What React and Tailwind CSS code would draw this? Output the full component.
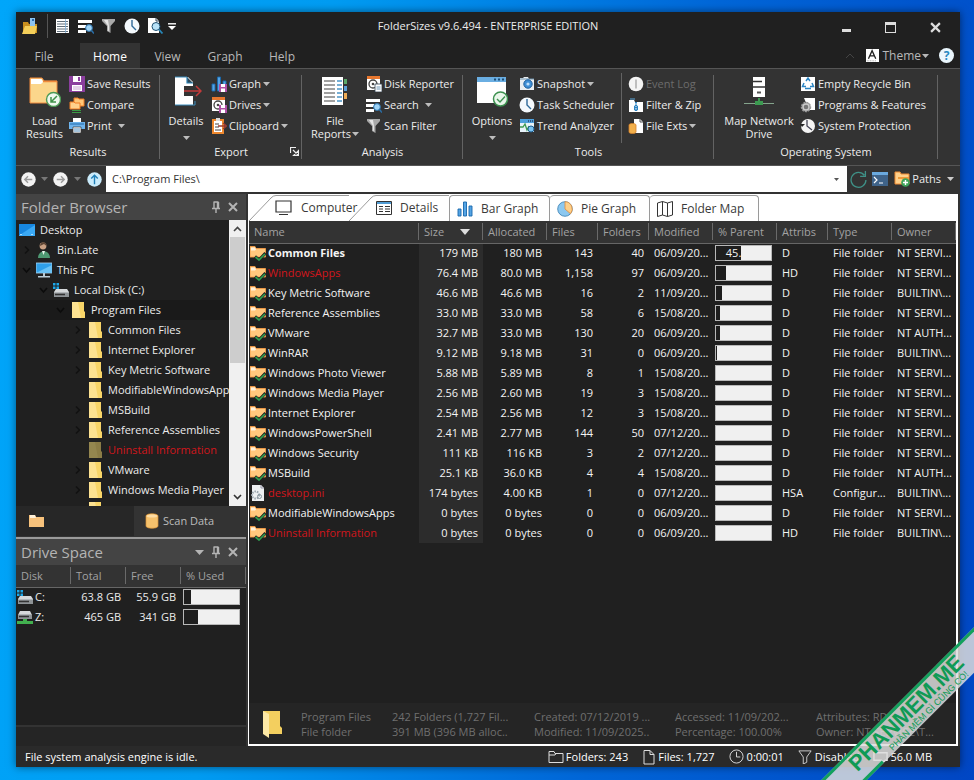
import React from "react";

/* ---------- icons ---------- */
const Svg = ({ s = 16, w, h, vb = "0 0 16 16", className = "", children }) => (
  <svg width={w || s} height={h || s} viewBox={vb} className={"shrink-0 " + className} fill="none" aria-hidden="true">
    {children}
  </svg>
);
const Caret = ({ className = "" }) => (
  <Svg w={7} h={4} vb="0 0 7 4" className={className}><path d="M0 0h7L3.500 4z" fill="currentColor" /></Svg>
);
const AppIcon = () => (
  <Svg><path d="M1 4h5l1 2h8v9H1z" fill="#c98f1e" /><path d="M8 0h5v10H8z" fill="#8ec5f0" /><path d="M10 1h2v2h-2z" fill="#2b6cb0" /><path d="M3 8h12l-2 8H0z" fill="#f4cf5a" /></Svg>
);
const ListIcon = () => (
  <Svg><path d="M1 1h13v14H1z" fill="#fff" /><path d="M2 3.500h11M2 6h11M2 8.500h11M2 11h11M2 13.500h11" stroke="#3a4a58" strokeWidth=".8" /><path d="M10.500 1v14" stroke="#7fb0d8" strokeWidth=".8" /></Svg>
);
const SearchIcon = () => (
  <Svg><path d="M0 2h14v3H0zM0 7h8v3H0zM0 12h8v3H0z" fill="#fff" /><circle cx="11" cy="10" r="3.400" fill="#9fd4f7" stroke="#2a6fa8" /><path d="M13.500 12.500 16 15.500" stroke="#2a6fa8" strokeWidth="1.600" /></Svg>
);
const Funnel = () => (
  <Svg><path d="M1 1h13v2L9.500 8v7L6 13V8L1 3z" fill="#a9a9a9" /><path d="M3 2h4l1 6v5l-1-.6V8z" fill="#e4e4e4" /></Svg>
);
const ClockIcon = () => (
  <Svg><circle cx="8" cy="8" r="7.500" fill="#f4f9fd" /><path d="M8 2v6l4 4" stroke="#2f6a99" strokeWidth="1.400" /></Svg>
);
const DocSearch = () => (
  <Svg><path d="M1 0h8l3 3v12H1z" fill="#fff" /><path d="M9 0v3h3" stroke="#345" /><circle cx="9" cy="8.500" r="4" fill="#b9e2f7" stroke="#1f4f70" /><path d="m12 11.500 3.500 4" stroke="#2787b8" strokeWidth="1.800" /></Svg>
);
const LoadIcon = () => (
  <Svg s={32} vb="0 0 32 32"><path d="M1 3h12l2 3h13v22H1z" fill="#fbd68b" stroke="#f08a3c" strokeWidth="1" /><path d="M2 4h10.500l1.500 3-2 2H2z" fill="#fff" /><path d="M14 6.500h14" stroke="#f08a3c" strokeWidth="1.500" /><circle cx="24.500" cy="24.500" r="7" fill="#eef8ee" stroke="#4c9a55" strokeWidth="1.400" /><path d="m28 21-6 6m0-5v5h5" stroke="#3f9149" strokeWidth="1.500" /></Svg>
);
const SaveIcon = () => (
  <Svg><path d="M0 0h16v16H0z" fill="#8b3f9e" /><path d="M4 0h8v6H4zM3 9h10v6H3z" fill="#fff" /><path d="M9 1h2v4H9z" fill="#8b3f9e" /><path d="M4 11h8M4 13h8" stroke="#c9a6d3" /></Svg>
);
const CompareIcon = () => (
  <Svg><path d="M5 1h4l1 1h5v7H5z" fill="#ffc778" stroke="#f07d22" /><path d="M1 5h4l1 1h5v6H1z" fill="#ffd18c" stroke="#f07d22" /><path d="M3 13.500h9M3 15.500h9" stroke="#3c9a45" /></Svg>
);
const PrintIcon = () => (
  <Svg><path d="M4 0h8v4H4z" fill="#fff" /><path d="M0 4h16v7H0z" fill="#6db3ec" /><path d="M1 6h14" stroke="#256ba8" /><path d="M4 9h8v6H4z" fill="#fff" stroke="#333" strokeWidth=".7" /><path d="M5 11h6M5 13h6" stroke="#4b88b8" /></Svg>
);
const DetailsIcon = () => (
  <Svg s={32} vb="0 0 32 32"><path d="M5 2h13l5 5v23H5z" fill="#fff" /><path d="M17 2v6h6" fill="#2e4a5a" stroke="#2f83b5" strokeWidth="1.200" /><path d="M14 11h10v10H14z" fill="#333" /><path d="M5 2h12M5 30h20v-4" stroke="#3a8cbc" strokeWidth="1" /><path d="M14 16h17m-5-5 5 5-5 5" stroke="#c23a3a" strokeWidth="1.500" /></Svg>
);
const MiniDisk = () => (
  <g><path d="M8 8h8v8H8z" fill="#b04fa6" /><path d="M10 8h4v3h-4zM10 12.500h4V16h-4z" fill="#fff" /></g>
);
const BarsIcon = ({ s = 16, disk = false }) => (
  <Svg s={s}><path d="M1 8h3v7H1zM6.500 1h3v14h-3zM12 5h3v10h-3z" fill="#55a4e4" stroke="#1767ac" strokeWidth=".9" />{disk && <MiniDisk />}</Svg>
);
const DriveRep = ({ doc = false }) => (
  <Svg><path d="M1 1h13v13H1z" fill="#fff" /><path d="M1 0h13v3H1z" fill="#e8772e" /><circle cx="7" cy="8" r="4" stroke="#444" strokeWidth="1.300" /><circle cx="7" cy="8" r="1.300" fill="#444" />{doc ? <g><path d="M9 8h7v8H9z" fill="#fff" stroke="#345" strokeWidth=".8" /><path d="M10.500 11h4m-4 2h4" stroke="#4a7fa8" strokeWidth=".8" /></g> : <MiniDisk />}</Svg>
);
const ClipIcon = () => (
  <Svg><path d="M2 2h10v13H2z" fill="#fff" stroke="#ee8930" strokeWidth="2" /><path d="M5 0h4v3H5z" fill="#ddd" /><path d="M4 6h4M4 9h4M4 12h6" stroke="#444" /><path d="M7 8h8m-3-3 3.500 3L12 11" stroke="#9c3d33" strokeWidth="1.300" /></Svg>
);
const ReportIcon = () => (
  <Svg s={32} vb="0 0 32 32"><path d="M3 2h21v28H3z" fill="#fff" /><path d="M5 6h11M5 10h11M5 14h11M5 18h11M5 22h11M5 26h11" stroke="#444" strokeWidth="1.200" /><path d="M18 6h5M18 10h5M18 14h5M18 18h5M18 22h5M18 26h5" stroke="#4b95c6" strokeWidth="1.300" /><path d="M25 4h3v5h-3z" fill="#5aa869" /><path d="M25 11h3v5h-3z" fill="#5a9fd8" /><path d="M25 18h3v6h-3z" fill="#efac55" /></Svg>
);
const OptionsIcon = () => (
  <Svg s={32} vb="0 0 32 32"><path d="M1 2h29v26H1z" fill="#fff" /><path d="M1 2h29v5H1z" fill="#6aaee2" /><path d="M18 4.500h2m2 0h2m2 0h2" stroke="#1c4e78" strokeWidth="2" /><circle cx="24.500" cy="24" r="7" fill="#e9f6ea" stroke="#3d9150" strokeWidth="1.500" /><path d="m21 24 3 3 5-5.500" stroke="#3d9150" strokeWidth="1.400" /></Svg>
);
const CameraIcon = () => (
  <Svg><path d="M1 2h3l1-1h4l1 2h5v11H1z" fill="#e9eef2" /><path d="M1 3h14" stroke="#6b8ea8" /><circle cx="9" cy="8" r="4.200" fill="#3f8fd6" stroke="#1f5f9c" /><circle cx="9" cy="8" r="1.600" fill="#bfe0fb" /></Svg>
);
const TrendIcon = () => (
  <Svg><path d="M1 1h14v13H1z" fill="#e8f3fa" /><path d="M1 1h14v4H1z" fill="#4ea0dc" /><path d="M9 3h5" stroke="#113" strokeDasharray="1 1" /><path d="M1 9h3l2-3 2 6 2-4" stroke="#3f9a50" strokeWidth="1.300" /><circle cx="12" cy="11" r="3" fill="#7cc4f2" stroke="#1e5f91" /></Svg>
);
const EventIcon = () => (
  <Svg><circle cx="8" cy="8" r="7.300" fill="#f4f4f4" /><path d="M8 3.500v9" stroke="#999" strokeWidth="1.200" /></Svg>
);
const ZipIcon = () => (
  <Svg><path d="M1 3h5l1 2h8v10H1z" fill="#fff" /><path d="M2 2h5" stroke="#58a6dc" /><path d="M8 5v10" stroke="#2e84c2" strokeWidth="2" strokeDasharray="1.500 1" /><path d="M6.500 9h3v4h-3z" stroke="#2e84c2" /></Svg>
);
const ExtsIcon = () => (
  <Svg><path d="M6 1h6l3 3v11H6z" fill="#fff" /><path d="M12 1v3h3" stroke="#555" /><path d="M1 7c0-2 7-2 7 0v7c0 2-7 2-7 0z" fill="#f2b04c" stroke="#d5812a" strokeWidth=".8" /></Svg>
);
const NetDrive = () => (
  <Svg s={32} vb="0 0 32 32"><path d="M10 2h12v20H10z" fill="#fff" /><path d="M10 6.500h9M10 12h12" stroke="#333" strokeWidth="1.300" /><path d="M14 17.500h4" stroke="#555" strokeWidth="2" /><path d="M1 28.500h30" stroke="#84a48c" /><path d="M12 26h8v4h-8zM15 23h2v4h-2z" fill="#3c9a51" /></Svg>
);
const RecycleIcon = () => (
  <Svg><path d="M1 1h14v14H1z" fill="#fff" /><path d="m6 5 2-3 2 3M4 7l-1.500 3.500H6M12 7l1.500 3.500H10M5 12.500h6" stroke="#2a85c4" strokeWidth="1.500" /></Svg>
);
const ProgIcon = () => (
  <Svg><path d="M4 1h11v12H9z" fill="#fff" /><circle cx="6" cy="10" r="4.500" fill="#777" stroke="#999" strokeWidth="1.500" strokeDasharray="2 1" /><circle cx="6" cy="10" r="3" stroke="#ccc" strokeWidth="1.400" /></Svg>
);
const ProtectIcon = () => (
  <Svg><circle cx="8" cy="8" r="7" fill="#f4f4f4" /><path d="M7 2v6l5 4" stroke="#445" strokeWidth="1.300" /><path d="M0 6h5L2 9z" fill="#222" /></Svg>
);
const NavIcon = ({ d, up }) => (
  <Svg s={15}><circle cx="8" cy="8" r="7.700" fill={up ? "#c9ebfb" : "#f3f3f3"} /><path d={d} stroke={up ? "#1f7fb8" : "#9b9b9b"} strokeWidth="1.500" /></Svg>
);
const PersonIcon = () => (
  <Svg><circle cx="7" cy="4" r="3.400" fill="#c9a184" /><path d="M4 4c0-5 7-5 6.500 0L8 2z" fill="#5b4433" /><path d="M2 16c0-9 12-9 12 0z" fill="#4e9872" /><path d="m6 9 1.500 4L9 9z" fill="#e8f3ec" /></Svg>
);
const DesktopIcon = () => (
  <Svg><path d="M0 2h16v12H0z" fill="#1787e0" /><path d="M0 13.500 16 3v11H0z" fill="#3aa9f5" /><path d="M1 12.500h13" stroke="#a5dbff" strokeDasharray="2 9" /></Svg>
);
const PcIcon = () => (
  <Svg><path d="M0 1h16v10H0z" fill="#2f9fe8" stroke="#a9d6f2" strokeWidth=".8" /><path d="M0 11 16 3v8z" fill="#6cc3f5" /><path d="M7 11h2v3H7zM2 14h12v1.500H2z" fill="#b9cbd6" /></Svg>
);
const DiskIcon = ({ net }) => (
  <Svg>
    <path d={net ? "m3 2-2 4v4h14V6l-2-4z" : "m3 7-2 3v5h15v-5l-2-3z"} fill="#d6d9db" />
    <path d={net ? "M1 5.500h14V10H1z" : "M1 10.500h15V15H1z"} fill="#8e9396" />
    <path d={net ? "M2 7.500h10" : "M2 12.500h10"} stroke="#333" strokeWidth="1.500" />
    {net ? <path d="M0 12h16v3H0zM6 10h4v5H6z" fill="#42b04f" /> : <path d="M0 1h2.500v2.500H0zM3.500 1H6v2.500H3.500zM0 4.500h2.500V7H0zM3.500 4.500H6V7H3.500z" fill="#1da7e8" />}
  </Svg>
);
const FolderIcon = ({ dim }) => (
  <Svg w={14} h={16} vb="0 0 14 16"><path d="M1 0h12v9l1 1v6H1z" fill={dim ? "#8b7c46" : "#f8d568"} /><path d="M1 0h6l3 16H1z" fill={dim ? "#94864f" : "#fde291"} /></Svg>
);
const FolderCheck = () => (
  <Svg><path d="M0 1.500h5l1 2h9.500V12H0z" fill="#ffc87d" stroke="#f39a45" strokeWidth=".9" /><path d="M1 2.500h4l1 2-1 1H1z" fill="#fff2dc" /><path d="m5 11.500 4 3.500L15.500 8" stroke="#222" strokeWidth="3" /><path d="m5.500 12 3.500 3L15 9" stroke="#2f9e4f" strokeWidth="1.700" /></Svg>
);
const IniIcon = () => (
  <Svg><path d="M2 0h9l3 3v13H2z" fill="#eef1f3" /><path d="M11 0v3h3" stroke="#99a" /><circle cx="5.500" cy="10" r="3.500" stroke="#9aa5ad" strokeWidth="2" strokeDasharray="1.500 1" /><circle cx="9.500" cy="11.500" r="2" stroke="#8b98a1" /></Svg>
);
const Pin = () => (
  <Svg s={12} vb="0 0 12 12"><path d="M3.500 1h5M4 1v6M7.500 1v6M8.500 1v6M2 7.500h8M6 8v4" stroke="currentColor" strokeWidth="1.400" /></Svg>
);
const Cross = ({ s = 10 }) => (
  <Svg s={s} vb="0 0 10 10"><path d="m1 1 8 8M9 1 1 9" stroke="currentColor" strokeWidth="2" /></Svg>
);
const Chevron = ({ open }) => (
  <Svg w={17} h={16} vb="0 0 17 16"><path d={open ? "m4 6 3.500 4L11 6" : "m6 4.500 3.500 3.500L6 11.500"} stroke={open ? "#0c0c0c" : "#121212"} strokeWidth="1.600" /></Svg>
);

/* ---------- ribbon ---------- */
const Small = ({ icon, label, caret, gap, disabled }) => (
  <button className={"flex h-[21px] items-center gap-[2px] whitespace-nowrap " + (disabled ? "text-[#6c6c6c]" : "")}>
    {icon}
    <span>{label}</span>
    {caret && <Caret className={gap ? "ml-1 text-[#bdbdbd]" : "text-[#bdbdbd]"} />}
  </button>
);
const Large = ({ icon, lines, caret, inlineCaret, width }) => (
  <button className={"flex h-[72px] flex-col items-center pt-[2px] leading-[13px] " + width}>
    {icon}
    <span className="mt-[7px] whitespace-nowrap">{lines[0]}</span>
    {lines[1] && (
      <span className="flex items-center gap-px whitespace-nowrap">
        {lines[1]}
        {inlineCaret && <Caret className="text-[#bdbdbd]" />}
      </span>
    )}
    {caret && <Caret className="mt-[9px] text-[#bdbdbd]" />}
  </button>
);
const Group = ({ label, width, pad, launcher, children }) => (
  <section aria-label={label} className={"relative flex shrink-0 flex-col " + width}>
    <div className={"flex h-[72px] " + pad}>{children}</div>
    <div className="text-center leading-[13px]">{label}</div>
    {launcher && (
      <button aria-label="Export settings" className="absolute right-[3px] bottom-[9px]">
        <Svg s={9} vb="0 0 9 9"><path d="M.5 6V.500H6M3 3l5 5M8.500 3.500v5h-5z" stroke="#eee" strokeWidth="1.200" fill="none" /></Svg>
      </button>
    )}
    <div className="absolute top-[2px] right-0 h-[84px] w-px bg-[#636363]" />
  </section>
);

/* ---------- data ---------- */
const tree = [
  ["Desktop", 0, <DesktopIcon />, null],
  ["Bin.Late", 1, <PersonIcon />, "closed"],
  ["This PC", 1, <PcIcon />, "open"],
  ["Local Disk (C:)", 2, <DiskIcon />, "open"],
  ["Program Files", 3, <FolderIcon />, "open"],
  ["Common Files", 4, <FolderIcon />, "closed"],
  ["Internet Explorer", 4, <FolderIcon />, "closed"],
  ["Key Metric Software", 4, <FolderIcon />, "closed"],
  ["ModifiableWindowsApps", 4, <FolderIcon />, null],
  ["MSBuild", 4, <FolderIcon />, "closed"],
  ["Reference Assemblies", 4, <FolderIcon />, "closed"],
  ["Uninstall Information", 4, <FolderIcon dim />, null],
  ["VMware", 4, <FolderIcon />, "closed"],
  ["Windows Media Player", 4, <FolderIcon />, "closed"],
  ["Windows Photo Viewer", 4, <FolderIcon />, "closed"],
];
const indents = ["pl-[3px]", "pl-[3px]", "pl-[20px]", "pl-[37px]", "pl-[54px]"];

const rows = [
  ["Common Files", "179 MB", "180 MB", "143", "40", "06/09/20...", 46, "D", "File folder", "NT SERVI..."],
  ["WindowsApps", "76.4 MB", "80.0 MB", "1,158", "97", "06/09/20...", 18, "HD", "File folder", "NT SERVI..."],
  ["Key Metric Software", "46.6 MB", "46.6 MB", "16", "2", "11/09/20...", 11, "D", "File folder", "BUILTIN\\..."],
  ["Reference Assemblies", "33.0 MB", "33.0 MB", "58", "6", "15/08/20...", 8, "D", "File folder", "NT SERVI..."],
  ["VMware", "32.7 MB", "33.0 MB", "130", "20", "06/09/20...", 8, "D", "File folder", "NT AUTH..."],
  ["WinRAR", "9.12 MB", "9.18 MB", "31", "0", "06/09/20...", 2, "D", "File folder", "BUILTIN\\..."],
  ["Windows Photo Viewer", "5.88 MB", "5.89 MB", "8", "1", "15/08/20...", 0, "D", "File folder", "NT SERVI..."],
  ["Windows Media Player", "2.56 MB", "2.60 MB", "19", "3", "15/08/20...", 0, "D", "File folder", "NT SERVI..."],
  ["Internet Explorer", "2.54 MB", "2.56 MB", "12", "3", "15/08/20...", 0, "D", "File folder", "NT SERVI..."],
  ["WindowsPowerShell", "2.41 MB", "2.77 MB", "144", "50", "07/12/20...", 0, "D", "File folder", "NT SERVI..."],
  ["Windows Security", "111 KB", "116 KB", "3", "2", "07/12/20...", 0, "D", "File folder", "NT SERVI..."],
  ["MSBuild", "25.1 KB", "36.0 KB", "4", "4", "15/08/20...", 0, "D", "File folder", "NT AUTH..."],
  ["desktop.ini", "174 bytes", "4.00 KB", "1", "0", "07/12/20...", 0, "HSA", "Configur...", "BUILTIN\\..."],
  ["ModifiableWindowsApps", "0 bytes", "0 bytes", "0", "0", "06/09/20...", 0, "D", "File folder", "NT SERVI..."],
  ["Uninstall Information", "0 bytes", "0 bytes", "0", "0", "06/09/20...", 0, "HD", "File folder", "BUILTIN\\..."],
];
const red = new Set(["WindowsApps", "desktop.ini", "Uninstall Information"]);

const UsageBar = ({ value, text }) => (
  <div className="flex h-[16px] w-[57px] border border-[#b8b8b8] bg-[#f0f0f0]">
    <div className="h-full overflow-hidden bg-[#1e1e1e] text-right leading-[14px]" style={{ width: value + "%" }}>{text}</div>
  </div>
);

const Th = ({ children, sort }) => (
  <th className="h-[22px] border-b border-[#666] p-0 text-left font-normal">
    <div className="flex h-[17px] items-center justify-between overflow-hidden border-r border-[#6a6a6a] pr-3 pl-[5px] whitespace-nowrap">
      {children}
      {sort && <Svg w={10} h={6} vb="0 0 10 6"><path d="M0 0h10L5 6z" fill="#ddd" /></Svg>}
    </div>
  </th>
);

const ViewTab = ({ icon, label, width, slant }) => (
  <button role="tab" className={"relative flex h-full shrink-0 items-center text-[12px] text-[#3a3a3a] " + width + (slant ? "" : " mt-px rounded-t-[4px] border-t border-r border-[#9a9a9a]")}>
    {slant && (
      <svg className="absolute bottom-0 left-0 h-full w-full" viewBox="0 0 100 27" preserveAspectRatio="none" fill="none" aria-hidden="true">
        <path d="M0 27 22 4Q24 1.500 27 1.500H100" stroke="#9a9a9a" />
      </svg>
    )}
    <span className="relative flex items-center">{icon}<span className="ml-2 whitespace-nowrap">{label}</span></span>
  </button>
);

const PanelHead = ({ title, menu }) => (
  <div className="flex h-[26px] shrink-0 items-center bg-[#444] pr-[8px] pl-[5px] text-[#b4b4b4]">
    <h2 className="grow text-[15px]">{title}</h2>
    {menu && <button aria-label="Panel menu" className="mr-[6px]"><Svg w={9} h={5} vb="0 0 9 5"><path d="M0 0h9L4.500 5z" fill="currentColor" /></Svg></button>}
    <button aria-label={"Pin " + title} className="mr-[6px]"><Pin /></button>
    <button aria-label={"Close " + title}><Cross /></button>
  </div>
);

export default function App() {
  return (
    <div className="relative flex h-screen min-h-[600px] flex-col overflow-hidden bg-[linear-gradient(100deg,#00a6fa_0%,#009cf2_30%,#0066d8_65%,#0046c4_100%)] pt-[12px] pr-[14px] pb-[13px] pl-[16px] font-['Open_Sans','Noto_Sans',sans-serif] text-[11px] leading-[16px] text-[#ececec]">
      <div className="flex min-h-0 grow flex-col bg-[#202020] shadow-[0_0_8px_rgba(0,0,0,0.5)]">
        {/* title bar */}
        <header className="grid h-[31px] shrink-0 grid-cols-[1fr_auto_1fr] items-center pb-[3px]">
          <div className="flex items-center pl-[6px]">
            <AppIcon />
            <div className="mr-[7px] ml-[9px] h-[24px] w-px bg-[#555]" />
            <div className="flex gap-[7px]">
              <button aria-label="Details"><ListIcon /></button>
              <button aria-label="Search"><SearchIcon /></button>
              <button aria-label="Scan filter"><Funnel /></button>
              <button aria-label="Task scheduler"><ClockIcon /></button>
              <button aria-label="Preview"><DocSearch /></button>
            </div>
            <button aria-label="Customize toolbar" className="ml-[5px]"><Svg w={8} h={7} vb="0 0 8 7"><path d="M0 .8h8" stroke="#fff" strokeWidth="1.400" /><path d="M0 3h8L4 7z" fill="#fff" /></Svg></button>
          </div>
          <h1 className="whitespace-nowrap">FolderSizes v9.6.494 - ENTERPRISE EDITION</h1>
          <div className="flex items-center justify-end gap-[34px] pt-[3px] pr-[19px] text-[#ddd]">
            <button aria-label="Minimize" className="mt-[6px] h-[3px] w-[9px] bg-[#ddd]" />
            <button aria-label="Maximize" className="h-[11px] w-[11px] border border-t-[3px] border-[#ddd]" />
            <button aria-label="Close"><Cross s={11} /></button>
          </div>
        </header>

        {/* ribbon tabs */}
        <nav className="flex h-[25px] shrink-0 items-stretch text-[12px] text-[#b8b8b8]">
          <button className="mr-2 w-[56px] pt-[3px]">File</button>
          <button className="w-[60px] bg-[#333] pt-[3px] text-white">Home</button>
          <button className="w-[55px] pt-[3px]">View</button>
          <button className="w-[60px] pt-[3px]">Graph</button>
          <button className="w-[54px] pt-[3px]">Help</button>
          <div className="flex grow items-center justify-end pr-[6px]">
            <button aria-label="Collapse ribbon" className="mr-[12px]"><Svg w={8} h={5} vb="0 0 8 5"><path d="m0 5 4-4 4 4" stroke="#444" /></Svg></button>
            <button className="flex items-center">
              <Svg s={13} className="mr-[3px]"><path d="M0 0h16v16H0z" fill="#fff" /><path d="m3 12 4.500-10L12 12M5 8.500h5" stroke="#222" strokeWidth="1.600" /><path d="M1 14.500h12" stroke="#888" strokeDasharray="1 1" /></Svg>
              Theme<Caret className="ml-px" />
            </button>
            <button aria-label="Help" className="ml-[10px] flex h-[15px] w-[15px] items-center justify-center rounded-full bg-[#eaf6fd] font-bold text-[#2888c0]">?</button>
          </div>
        </nav>

        {/* ribbon */}
        <div className="flex h-[98px] shrink-0 overflow-hidden border-t border-b border-[#555] bg-[#333] pt-[4px]">
          <Group label="Results" width="w-[144px]" pad="pl-[4px]">
            <Large width="w-[49px]" icon={<LoadIcon />} lines={["Load", "Results"]} />
            <div>
              <Small icon={<SaveIcon />} label="Save Results" />
              <Small icon={<CompareIcon />} label="Compare" />
              <Small icon={<PrintIcon />} label="Print" caret gap />
            </div>
          </Group>
          <Group label="Export" width="w-[142px]" pad="pl-px" launcher>
            <Large width="w-[50px]" icon={<DetailsIcon />} lines={["Details"]} caret />
            <div>
              <Small icon={<BarsIcon disk />} label="Graph" caret />
              <Small icon={<DriveRep />} label="Drives" caret />
              <Small icon={<ClipIcon />} label="Clipboard" caret />
            </div>
          </Group>
          <Group label="Analysis" width="w-[161px]" pad="pl-[2px]">
            <Large width="w-[62px]" icon={<ReportIcon />} lines={["File", "Reports"]} inlineCaret />
            <div>
              <Small icon={<DriveRep doc />} label="Disk Reporter" />
              <Small icon={<SearchIcon />} label="Search" caret gap />
              <Small icon={<Funnel />} label="Scan Filter" />
            </div>
          </Group>
          <Group label="Tools" width="w-[251px]" pad="pl-[2px]">
            <Large width="w-[54px]" icon={<OptionsIcon />} lines={["Options"]} caret />
            <div className="w-[102px]">
              <Small icon={<CameraIcon />} label="Snapshot" caret />
              <Small icon={<ClockIcon />} label="Task Scheduler" />
              <Small icon={<TrendIcon />} label="Trend Analyzer" />
            </div>
            <div className="mr-[6px] h-[70px] w-px bg-[#636363]" />
            <div>
              <Small icon={<EventIcon />} label="Event Log" disabled />
              <Small icon={<ZipIcon />} label="Filter & Zip" />
              <Small icon={<ExtsIcon />} label="File Exts" caret />
            </div>
          </Group>
          <Group label="Operating System" width="w-[224px]" pad="pl-[4px]">
            <Large width="w-[82px]" icon={<NetDrive />} lines={["Map Network", "Drive"]} />
            <div>
              <Small icon={<RecycleIcon />} label="Empty Recycle Bin" />
              <Small icon={<ProgIcon />} label="Programs & Features" />
              <Small icon={<ProtectIcon />} label="System Protection" />
            </div>
          </Group>
        </div>

        {/* address bar */}
        <div className="flex h-[26px] shrink-0 items-center bg-[#333] pr-[6px] pl-[5px]">
          <button aria-label="Back"><NavIcon d="M12 8H4m3.500-3.500L4 8l3.500 3.500" /></button>
          <Caret className="mx-[5px] text-[#777]" />
          <button aria-label="Forward"><NavIcon d="M4 8h8M8.500 4.500 12 8l-3.500 3.500" /></button>
          <Caret className="mx-[6px] text-[#777]" />
          <button aria-label="Up"><NavIcon up d="M8 13V4M4.500 7 8 3.500 11.500 7" /></button>
          <div className="ml-[4px] flex h-full grow items-center bg-white pr-[8px]">
            <input aria-label="Path" defaultValue={"C:\\Program Files\\"} className="h-full min-w-0 grow bg-white px-[6px] pb-[2px] text-[#333] outline-none" />
            <button aria-label="Path history"><Svg w={5} h={3} vb="0 0 5 3"><path d="M0 0h5L2.500 3z" fill="#555" /></Svg></button>
          </div>
          <button aria-label="Refresh" className="mr-[5px] ml-[3px]"><Svg s={17}><path d="M13.500 4A7 7 0 1 0 15 8.500M14.500 0v5h-5" stroke="#3f9187" strokeWidth="1.200" /></Svg></button>
          <button aria-label="Console" className="mr-[6px]"><Svg><path d="M0 1h16v14H0z" fill="#3f6389" /><path d="M0 1h16v3H0z" fill="#6aa9de" /><path d="m2 6 3 3-3 3M7 12h4" stroke="#fff" strokeWidth="1.200" /></Svg></button>
          <button className="flex items-center">
            <Svg className="mr-[2px]"><path d="M1 1h5l1 2h8v10H1z" fill="#ffd08a" stroke="#ee8a32" /><path d="M4 6h11v2H4z" fill="#ee9a3a" /><circle cx="11.500" cy="11.500" r="4.300" fill="#3fa35a" /><path d="M11.500 9v5M9 11.500h5" stroke="#fff" strokeWidth="1.400" /></Svg>
            Paths<Caret className="ml-[6px] text-[#ccc]" />
          </button>
        </div>

        {/* body */}
        <div className="flex min-h-0 grow bg-[#333] pt-[2px]">
          <aside className="flex w-[230px] shrink-0 flex-col">
            <PanelHead title="Folder Browser" />
            <div className="flex h-[286px] shrink-0">
              <ul className="min-w-0 grow overflow-hidden bg-[#202020]">
                {tree.map(([name, level, icon, state]) => (
                  <li key={name} className={"flex h-[20px] items-center whitespace-nowrap " + indents[level] + (name === "Program Files" ? " bg-[#1a1a1a]" : "")}>
                    {level > 0 && (state ? <Chevron open={state === "open"} /> : <span className="w-[17px] shrink-0" />)}
                    <span className="flex w-[16px] shrink-0 justify-center">{icon}</span>
                    <span className={"ml-[5px] " + (red.has(name) ? "text-[#d0161c]" : "")}>{name}</span>
                  </li>
                ))}
              </ul>
              <div className="flex w-[17px] shrink-0 flex-col items-center bg-[#f0f0f0] py-[6px]" aria-hidden="true">
                <Svg w={9} h={6} vb="0 0 9 6"><path d="m1 5 3.500-3.500L8 5" stroke="#444" strokeWidth="1.600" /></Svg>
                <div className="mt-[5px] h-[126px] w-[15px] bg-[#cdcdcd]" />
                <div className="grow" />
                <Svg w={9} h={6} vb="0 0 9 6"><path d="m1 1 3.500 3.500L8 1" stroke="#333" strokeWidth="1.600" /></Svg>
              </div>
            </div>
            <div className="flex h-[31px] shrink-0 bg-[#333] pb-px text-[#bcbcbc]" role="tablist">
              <button role="tab" aria-label="Folder Browser" className="flex w-[118px] items-center bg-[#272727] pl-[13px]">
                <Svg><path d="M0 2h6l1 2h8v10H0z" fill="#f7c27c" /><path d="M1 2h5l1 3H1z" fill="#fff0d8" /></Svg>
              </button>
              <button role="tab" className="flex items-center gap-[3px] pl-[10px]">
                <Svg><path d="M2 3c0-3 12-3 12 0v10c0 3-12 3-12 0z" fill="#f5c16c" stroke="#db9437" strokeWidth=".7" /><path d="M2.500 3c0 2 11 2 11 0s-11-2-11 0z" fill="#fddca4" /></Svg>
                Scan Data
              </button>
            </div>
            <div className="h-[2px] shrink-0 bg-[#9a9a9a]" />
            <PanelHead title="Drive Space" menu />
            <div className="flex min-h-0 grow flex-col bg-[#202020]">
              <table className="w-full table-fixed border-collapse">
                <colgroup><col className="w-[55px]" /><col className="w-[55px]" /><col className="w-[55px]" /><col /></colgroup>
                <thead className="bg-[#333] text-[#a2a2a2]"><tr><Th>Disk</Th><Th>Total</Th><Th>Free</Th><Th>% Used</Th></tr></thead>
                <tbody>
                  {[["C:", "63.8 GB", "55.9 GB", 12, false], ["Z:", "465 GB", "341 GB", 26, true]].map(([d, t, f, v, net]) => (
                    <tr key={d} className="h-[20px]">
                      <td className="p-0"><span className="flex items-center gap-[2px] pl-px"><DiskIcon net={net} />{d}</span></td>
                      <td className="p-0 pr-[5px] text-right whitespace-nowrap">{t}</td>
                      <td className="p-0 pr-[5px] text-right whitespace-nowrap">{f}</td>
                      <td className="p-0 pl-[2px]"><UsageBar value={v} /></td>
                    </tr>
                  ))}
                </tbody>
              </table>
              <div className="grow" />
              <div className="h-[21px] border-t-2 border-[#333] bg-[#252525]" />
            </div>
          </aside>

          <main className="ml-[2px] flex min-w-0 grow flex-col border-b-2 border-l border-white bg-[#202020]">
            <div className="flex h-[27px] shrink-0 overflow-hidden bg-white" role="tablist">
              <ViewTab slant width="w-[100px] pl-[26px]" label="Computer" icon={<Svg w={18} h={16} vb="0 0 18 16"><path d="M1 1h15v11H1zM4 14.500h9" stroke="#333" strokeWidth="1.200" /></Svg>} />
              <ViewTab slant width="w-[100px] pl-[27px]" label="Details" icon={<Svg><path d="M.5 1.500h15v13H.500z" stroke="#333" /><path d="M1 2h14v2H1z" fill="#4f9bd3" /><path d="M3 6.500h4M3 9h4M3 11.500h4M9 6.500h5M9 9h5M9 11.500h5" stroke="#333" /></Svg>} />
              <ViewTab width="w-[101px] border-l pl-[7px]" label="Bar Graph" icon={<BarsIcon />} />
              <ViewTab width="w-[100px] pl-[7px]" label="Pie Graph" icon={<Svg><circle cx="8" cy="8" r="7.300" fill="#8cc8f0" stroke="#357cb0" strokeWidth=".8" /><path d="M8 8V.700a7.300 7.300 0 0 1 5.500 12z" fill="#fdd08a" stroke="#e08c3a" strokeWidth=".8" /></Svg>} />
              <ViewTab width="w-[109px] pl-[7px]" label="Folder Map" icon={<Svg><path d="m.5 2 5-1.500 5 1.500 5-1.500V14l-5 1.500-5-1.500-5 1.500zM5.500.500V14M10.500 2v13.500" stroke="#333" /></Svg>} />
            </div>
            <div className="flex min-h-0 grow flex-col border-r-2 border-white">
              <table className="w-full table-fixed border-collapse">
                <colgroup>
                  <col /><col className="w-[64px]" /><col className="w-[64px]" /><col className="w-[51px]" /><col className="w-[51px]" />
                  <col className="w-[64px]" /><col className="w-[64px]" /><col className="w-[51px]" /><col className="w-[64px]" /><col className="w-[64px]" />
                </colgroup>
                <thead className="bg-[#333] text-[#a2a2a2]">
                  <tr>
                    {["Name", "Size", "Allocated", "Files", "Folders", "Modified", "% Parent", "Attribs", "Type", "Owner"].map((h) => (
                      <Th key={h} sort={h === "Size"}>{h}</Th>
                    ))}
                  </tr>
                </thead>
                <tbody className="text-[#f4f4f4]">
                  {rows.map(([n, s, a, f, d, m, p, at, t, o]) => (
                    <tr key={n} className="h-[20px] whitespace-nowrap">
                      <td className="p-0">
                        <span className={"flex items-center gap-[2px] pl-px " + (red.has(n) ? "text-[#d0161c] " : "") + (n === "Common Files" ? "font-bold" : "")}>
                          {n === "desktop.ini" ? <IniIcon /> : <FolderCheck />}{n}
                        </span>
                      </td>
                      <td className="bg-[#2c2c2c] p-0 pr-[5px] text-right">{s}</td>
                      <td className="p-0 pr-[5px] text-right">{a}</td>
                      <td className="p-0 pr-[5px] text-right">{f}</td>
                      <td className="p-0 pr-[5px] text-right">{d}</td>
                      <td className="p-0 pl-[5px]">{m}</td>
                      <td className="p-0 pl-[2px]"><UsageBar value={p} text={p === 46 ? "45." : ""} /></td>
                      <td className="p-0 pl-[5px]">{at}</td>
                      <td className="p-0 pl-[5px]">{t}</td>
                      <td className="p-0 pl-[5px]">{o}</td>
                    </tr>
                  ))}
                </tbody>
              </table>
              <div className="grow" />
              <div className="flex h-[41px] shrink-0 items-center overflow-hidden bg-[#252525] leading-[15px] whitespace-nowrap text-[#6f6f6f]">
                <div className="flex w-[52px] shrink-0 pl-[14px]">
                  <Svg w={20} h={28} vb="0 0 20 28"><path d="M0 1h17v15l2 2v6H5z" fill="#f3cf5f" /><path d="M0 1l6 3v24l-6-4z" fill="#fde9a6" /></Svg>
                </div>
                <div className="w-[91px] shrink-0">Program Files<br />File folder</div>
                <div className="w-[142px] shrink-0">242 Folders (1,727 Fil...<br />391 MB (396 MB alloc..</div>
                <div className="w-[141px] shrink-0">Created: 07/12/2019 ...<br />Modified: 11/09/2025..</div>
                <div className="w-[141px] shrink-0">Accessed: 11/09/202...<br />Percentage: 100.00%</div>
                <div>Attributes: RD<br />Owner: NT SERVICE\T...</div>
              </div>
            </div>
          </main>
          <div className="w-[2px] shrink-0 bg-[#333]" />
        </div>

        {/* status bar */}
        <footer className="flex h-[21px] shrink-0 items-center bg-[#2a2a2a] pr-[28px] pl-[9px] whitespace-nowrap text-white">
          <span className="grow">File system analysis engine is idle.</span>
          <Svg className="mr-[2px]"><path d="M1 2.500h5l1 2h8v9H1zM1 6h6l1-1.500" stroke="#ddd" /></Svg>Folders: 243
          <Svg w={12} h={16} vb="0 0 12 16" className="mr-[3px] ml-[15px]"><path d="M1 1.500h6l4 4V15H1zM7 1.500v4h4" stroke="#ddd" /></Svg>Files: 1,727
          <Svg s={15} className="mr-[3px] ml-[14px]"><circle cx="8" cy="8" r="7" stroke="#ddd" /><path d="M8 3v5.500h4" stroke="#ddd" /></Svg>0:00:01
          <Svg s={14} className="mr-[3px] ml-[14px]"><path d="M1 1h14L10 8v6l-4 2V8z" stroke="#ddd" /></Svg>Disabled
          <Svg s={15} className="mr-[2px] ml-[14px]"><path d="M1 4h14v8h-2l-1 1h-2l-1-1H1z" stroke="#eee" strokeWidth="1.500" /></Svg>56.0 MB
        </footer>
      </div>

      {/* corner ribbon */}
      <div className="pointer-events-none absolute right-0 bottom-0 h-[160px] w-[160px] overflow-hidden">
        <div className="absolute top-[73px] left-[-24px] flex h-[32px] w-[250px] -rotate-45 flex-col items-center border-t-[3px] border-[#12a05c] bg-[#dcdcdc]/85 font-['Liberation_Sans',sans-serif] text-[#0f9a55]">
          <span className="pr-[18px] text-[22px] leading-[20px] font-black">PHANMEM.ME</span>
          <span className="pl-[17px] text-[9px] leading-[9px]">PHẦN MỀM GÌ CŨNG CÓ!</span>
          <div className="absolute bottom-0 left-0 h-[3px] w-[65px] bg-[#12a05c]" />
        </div>
      </div>
    </div>
  );
}
